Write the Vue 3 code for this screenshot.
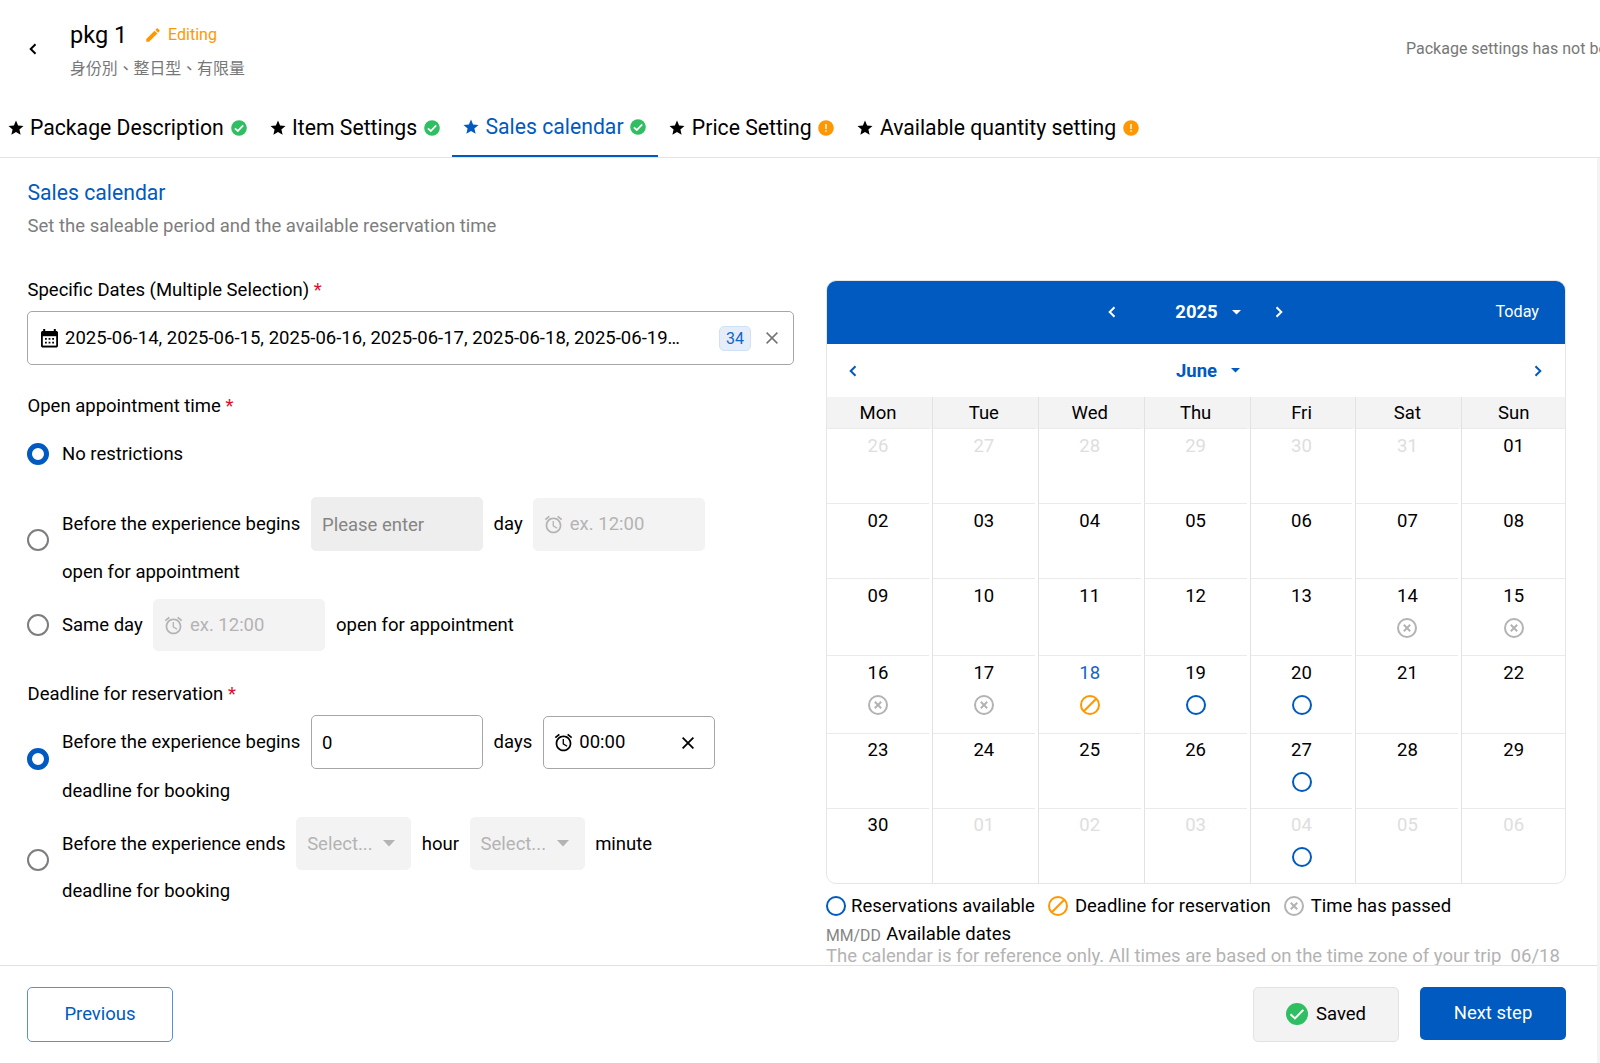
<template>
  <div class="page">
    <header class="page-header">
      <button class="back-btn" aria-label="Back">
        <svg width="8" height="12" viewBox="0 0 8 12" fill="none" stroke="currentColor" stroke-width="2">
          <polyline points="6.5 1.2 1.7 6 6.5 10.8" />
        </svg>
      </button>
      <div class="title-box">
        <div class="title-row">
          <h1 class="title">pkg 1</h1>
          <svg class="pencil" width="18" height="18" viewBox="0 0 24 24" fill="currentColor">
            <path d="M20.71 7.04c.39-.39.39-1.04 0-1.41l-2.34-2.34c-.37-.39-1.02-.39-1.41 0l-1.84 1.83 3.75 3.75M3 17.25V21h3.75L17.81 9.93l-3.75-3.75L3 17.25z" />
          </svg>
          <span class="status">Editing</span>
        </div>
        <p class="subtitle">身份別、整日型、有限量</p>
      </div>
      <div class="header-note">Package settings has not been</div>
    </header>

    <nav class="tabs">
      <div v-for="tab in tabs" :key="tab.id" class="tab" :class="{ active: tab.id === activeTab }" @click="activeTab = tab.id">
        <svg class="star" width="18" height="18" viewBox="0 0 24 24" fill="currentColor">
          <path d="M12 17.27L18.18 21l-1.64-7.03L22 9.24l-7.19-.61L12 2 9.19 8.63 2 9.24l5.46 4.73L5.82 21z" />
        </svg>
        <span>{{ tab.label }}</span>
        <svg class="badge" width="16" height="16" viewBox="0 0 16 16">
          <template v-if="tab.done">
            <circle cx="8" cy="8" r="7.8" fill="#2fbe61" />
            <polyline points="3.9 8.3 6.8 11 12.2 5.4" fill="none" stroke="#fff" stroke-width="1.8" />
          </template>
          <template v-else>
            <circle cx="8" cy="8" r="7.8" fill="#ff9800" />
            <path d="M7.3 4h1.4v5H7.3zM7.3 10.3h1.4v1.5H7.3z" fill="#fff" />
          </template>
        </svg>
      </div>
    </nav>

    <div class="body">
      <main class="content">
        <h2 class="section-title">Sales calendar</h2>
        <p class="section-desc">Set the saleable period and the available reservation time</p>

        <div class="columns">
          <section class="form">
            <div class="label">Specific Dates (Multiple Selection) <span class="required">*</span></div>
            <div class="field date-field">
              <svg width="17" height="19" viewBox="0 0 17 19">
                <path d="M2.2 0h2v2h8.6V0h2v2h.4c1 0 1.8.7 1.8 1.7v13.1c0 1-.8 1.8-1.8 1.8H1.8c-1 0-1.8-.8-1.8-1.8V3.7C0 2.7.8 2 1.8 2h.4z" fill="#000" />
                <path d="M1.8 7.2h13.4v9.4H1.8z" fill="#fff" />
                <path d="M4 9h1.8v1.8H4zM7.6 9h1.8v1.8H7.6zM11.2 9H13v1.8h-1.8zM4 12.8h1.8v1.8H4zM7.6 12.8h1.8v1.8H7.6zM11.2 12.8H13v1.8h-1.8z" fill="#000" />
              </svg>
              <span class="date-text">2025-06-14, 2025-06-15, 2025-06-16, 2025-06-17, 2025-06-18, 2025-06-19…</span>
              <span class="count">34</span>
              <svg class="clear grey" width="12" height="12" viewBox="0 0 12 12">
                <path d="M.6.6l10.8 10.8M11.4.6L.6 11.4" />
              </svg>
            </div>

            <div class="label open-label">Open appointment time <span class="required">*</span></div>

            <div class="option option-none">
              <span class="radio checked"></span>
              <span>No restrictions</span>
            </div>

            <div class="option option-before">
              <span class="radio"></span>
              <div class="option-body">
                <div class="line">
                  <span>Before the experience begins</span>
                  <div class="field disabled number">Please enter</div>
                  <span>day</span>
                  <div class="field disabled time">
                    <svg width="21" height="21" viewBox="0 0 24 24" fill="currentColor"><path :d="alarmPath" /></svg>
                    <span>ex. 12:00</span>
                  </div>
                </div>
                <div class="line-two">open for appointment</div>
              </div>
            </div>

            <div class="option option-same">
              <span class="radio"></span>
              <div class="line">
                <span>Same day</span>
                <div class="field disabled time">
                  <svg width="21" height="21" viewBox="0 0 24 24" fill="currentColor"><path :d="alarmPath" /></svg>
                  <span>ex. 12:00</span>
                </div>
                <span>open for appointment</span>
              </div>
            </div>

            <div class="label deadline-label">Deadline for reservation <span class="required">*</span></div>

            <div class="option option-begins">
              <span class="radio checked"></span>
              <div class="option-body">
                <div class="line">
                  <span>Before the experience begins</span>
                  <div class="field number">0</div>
                  <span>days</span>
                  <div class="field time">
                    <svg width="21" height="21" viewBox="0 0 24 24" fill="currentColor"><path :d="alarmPath" /></svg>
                    <span>00:00</span>
                    <svg class="clear" width="12" height="12" viewBox="0 0 12 12">
                      <path d="M.6.6l10.8 10.8M11.4.6L.6 11.4" />
                    </svg>
                  </div>
                </div>
                <div class="line-two">deadline for booking</div>
              </div>
            </div>

            <div class="option option-ends">
              <span class="radio"></span>
              <div class="option-body">
                <div class="line">
                  <span>Before the experience ends</span>
                  <div class="field disabled select">
                    <span>Select...</span>
                    <svg width="12" height="7" viewBox="0 0 12 7" fill="currentColor"><path d="M0 0h12L6 6.5z" /></svg>
                  </div>
                  <span>hour</span>
                  <div class="field disabled select">
                    <span>Select...</span>
                    <svg width="12" height="7" viewBox="0 0 12 7" fill="currentColor"><path d="M0 0h12L6 6.5z" /></svg>
                  </div>
                  <span>minute</span>
                </div>
                <div class="line-two">deadline for booking</div>
              </div>
            </div>
          </section>

          <section class="calendar-side">
            <div class="calendar">
              <div class="year-bar">
                <svg class="chevron" width="8" height="12" viewBox="0 0 8 12"><polyline points="6.5 1.2 1.7 6 6.5 10.8" /></svg>
                <div class="year">
                  2025
                  <svg width="9" height="5" viewBox="0 0 9 5" fill="currentColor"><path d="M0 0h9L4.5 4.5z" /></svg>
                </div>
                <svg class="chevron" width="8" height="12" viewBox="0 0 8 12"><polyline points="1.5 1.2 6.3 6 1.5 10.8" /></svg>
                <span class="today">Today</span>
              </div>
              <div class="month-bar">
                <svg class="chevron" width="8" height="12" viewBox="0 0 8 12"><polyline points="6.5 1.2 1.7 6 6.5 10.8" /></svg>
                <div class="month">
                  June
                  <svg width="9" height="5" viewBox="0 0 9 5" fill="currentColor"><path d="M0 0h9L4.5 4.5z" /></svg>
                </div>
                <svg class="chevron" width="8" height="12" viewBox="0 0 8 12"><polyline points="1.5 1.2 6.3 6 1.5 10.8" /></svg>
              </div>
              <div class="grid">
                <div v-for="day in weekdays" :key="day" class="cell weekday">
                  <div class="cell-inner">{{ day }}</div>
                </div>
                <div v-for="(cell, i) in cells" :key="i" class="cell">
                  <div class="cell-inner" :class="{ muted: cell.muted, current: cell.mark === 'deadline' }">
                    <span>{{ cell.date }}</span>
                    <svg v-if="cell.mark" class="mark" width="20" height="20" viewBox="0 0 20 20" fill="none" :stroke="marks[cell.mark].color">
                      <circle cx="10" cy="10" r="9" stroke-width="2" />
                      <path :d="marks[cell.mark].path" stroke-width="2" />
                    </svg>
                  </div>
                </div>
              </div>
            </div>

            <div class="legend">
              <div v-for="item in legend" :key="item.mark" class="legend-item" :class="item.mark">
                <svg width="20" height="20" viewBox="0 0 20 20" fill="none" :stroke="marks[item.mark].color">
                  <circle cx="10" cy="10" r="9" stroke-width="2" />
                  <path :d="marks[item.mark].path" stroke-width="2" />
                </svg>
                <span>{{ item.label }}</span>
              </div>
            </div>
            <div class="dates-legend">
              <span class="mmdd">MM/DD</span>
              <span>Available dates</span>
            </div>
            <p class="hint">The calendar is for reference only. All times are based on the time zone of your trip&nbsp; 06/18</p>
          </section>
        </div>
      </main>

      <footer class="footer">
        <button class="btn btn-previous">Previous</button>
        <button class="btn btn-saved">
          <svg width="22" height="22" viewBox="0 0 16 16">
            <circle cx="8" cy="8" r="8" fill="#2fbe61" />
            <polyline points="3.3 8.2 6.5 11.2 12.6 5" fill="none" stroke="#fff" stroke-width="1.5" />
          </svg>
          Saved
        </button>
        <button class="btn btn-next">Next step</button>
      </footer>
    </div>
  </div>
</template>

<script setup>
import { ref } from 'vue';

const activeTab = ref('calendar');

const tabs = [
  { id: 'description', label: 'Package Description', done: true },
  { id: 'items', label: 'Item Settings', done: true },
  { id: 'calendar', label: 'Sales calendar', done: true },
  { id: 'price', label: 'Price Setting', done: false },
  { id: 'quantity', label: 'Available quantity setting', done: false }
];

const weekdays = ['Mon', 'Tue', 'Wed', 'Thu', 'Fri', 'Sat', 'Sun'];

const alarmPath = 'M22 5.72l-4.6-3.86-1.29 1.53 4.6 3.86L22 5.72zM7.88 3.39L6.6 1.86 2 5.71l1.29 1.53 4.59-3.85zM12.5 8H11v6l4.75 2.85.75-1.23-4-2.37V8zM12 4c-4.97 0-9 4.03-9 9s4.02 9 9 9c4.97 0 9-4.03 9-9s-4.03-9-9-9zm0 16c-3.87 0-7-3.13-7-7s3.13-7 7-7 7 3.13 7 7-3.13 7-7 7z';

const marks = {
  available: { color: '#005abf', path: '' },
  deadline: { color: '#ff9800', path: 'M3.8 16.2L16.2 3.8' },
  passed: { color: '#b3b3b3', path: 'M6.8 6.8l6.4 6.4M13.2 6.8l-6.4 6.4' }
};

const legend = [
  { mark: 'available', label: 'Reservations available' },
  { mark: 'deadline', label: 'Deadline for reservation' },
  { mark: 'passed', label: 'Time has passed' }
];

// June 2025, padded with the days around it; keys are positions in the 6x7 grid
const markByIndex = {
  19: 'passed',
  20: 'passed',
  21: 'passed',
  22: 'passed',
  23: 'deadline',
  24: 'available',
  25: 'available',
  32: 'available',
  39: 'available'
};

const cells = Array.from({ length: 42 }, (_, i) => {
  const date = new Date(2025, 4, 26 + i);
  return {
    date: String(date.getDate()).padStart(2, '0'),
    muted: date.getMonth() !== 5,
    mark: markByIndex[i]
  };
});
</script>

<style>
body {
  margin: 0;
  background: #fff;
}
</style>

<style scoped>
.page {
  width: 1600px;
  height: 1063px;
  overflow: hidden;
  display: flex;
  flex-direction: column;
  background: #fff;
  color: #000;
  font-family: Roboto, "Noto Sans CJK TC", sans-serif;
  font-size: 18.5px;
  line-height: 24px;
  box-sizing: border-box;
}

.page *,
.page *::before {
  box-sizing: border-box;
}

svg {
  display: block;
  flex-shrink: 0;
}

h1,
h2,
p {
  margin: 0;
  font-weight: 400;
}

button {
  font: inherit;
  letter-spacing: inherit;
  padding: 0;
  cursor: pointer;
}

/* Header */
.page-header {
  height: 105px;
  flex-shrink: 0;
  display: flex;
  align-items: flex-start;
  white-space: nowrap;
}

.back-btn {
  margin: 43px 0 0 28.5px;
  border: none;
  background: none;
  color: #000;
}

.title-box {
  margin: 19px 0 0 33.5px;
}

.title-row {
  display: flex;
  align-items: center;
  height: 31px;
}

.title {
  font-size: 23.5px;
}

.pencil {
  color: #ff9800;
  margin-left: 17px;
}

.status {
  color: #ff9800;
  font-size: 16px;
  margin-left: 6px;
}

.subtitle {
  font-size: 15.9px;
  line-height: 24px;
  color: #777;
  margin-top: 7px;
}

.header-note {
  width: 194px;
  margin: 37px 0 0 auto;
  overflow: hidden;
  font-size: 16px;
  color: #777;
}

/* Tabs */
.tabs {
  height: 53px;
  flex-shrink: 0;
  display: flex;
  border-bottom: 1px solid #e4e4e4;
  margin-left: -3.5px;
}

.tab {
  height: 52px;
  display: flex;
  align-items: center;
  padding: 0 12px 6px 10px;
  font-size: 21.2px;
  cursor: pointer;
  white-space: nowrap;
}

.star {
  margin-right: 5.5px;
}

.badge {
  margin-left: 6.8px;
}

.tab.active {
  color: #005abf;
  border-bottom: 2px solid #005abf;
}

/* Body */
.body {
  flex: 1;
  min-height: 0;
  display: flex;
  flex-direction: column;
  border-right: 3px solid #f3f3f3;
}

.content {
  height: 807px;
  overflow: hidden;
  padding: 21px 31px 0 27px;
}

.section-title {
  font-size: 21.2px;
  line-height: 28px;
  padding-left: 0.5px;
  color: #005abf;
}

.section-desc {
  margin-top: 7px;
  padding-left: 0.5px;
  letter-spacing: 0.015px;
  color: #7d7d7d;
}

.columns {
  display: flex;
  justify-content: space-between;
  margin-top: 40px;
}

.form {
  width: 767px;
}

.label {
  padding-left: 0.5px;
}

.required {
  color: #d9112f;
}

.field {
  display: flex;
  align-items: center;
  height: 54px;
  border: 1px solid #a6a6a6;
  border-radius: 5px;
  padding-left: 10px;
  white-space: nowrap;
}

.field.disabled {
  background: #f3f3f3;
  border-color: #f3f3f3;
  color: #b3b3b3;
}

.date-field {
  margin-top: 9px;
  padding: 0 15px 0 13px;
}

.date-text {
  margin-left: 7px;
  flex: 1;
  letter-spacing: 0.015px;
}

.count {
  width: 32px;
  height: 25px;
  border: 1px solid #cfe2f5;
  border-radius: 5px;
  background: #e5eef8;
  color: #1464c8;
  font-size: 16px;
  line-height: 23px;
  text-align: center;
}

.clear {
  fill: none;
  stroke: #000;
  stroke-width: 1.8;
}

.clear.grey {
  stroke: #777;
  stroke-width: 1.6;
  margin-left: 15px;
}

.open-label {
  margin-top: 29px;
}

.deadline-label {
  margin-top: 31px;
}

.option {
  display: flex;
  align-items: center;
  white-space: nowrap;
}

.radio {
  width: 22px;
  height: 22px;
  margin: 0 13px 1px 0;
  flex-shrink: 0;
  border: 2px solid #7d7d7d;
  border-radius: 50%;
}

.radio.checked {
  border: 5.5px solid #005abf;
}

.line {
  display: flex;
  align-items: center;
  gap: 10.6px;
}

.option-none {
  margin-top: 24px;
}

.option-before {
  margin-top: 31px;
}

.option-same {
  margin-top: 15px;
}

.option-begins {
  margin-top: 9px;
}

.option-ends {
  margin-top: 14px;
}

.line-two {
  margin-top: 9px;
}

.option-begins .line-two {
  margin-top: 10px;
}

.number {
  width: 172px;
  padding-top: 1px;
}

.number.disabled {
  background: #eee;
  border-color: #eee;
  color: #858585;
}

.time {
  width: 172px;
  height: 53px;
  padding: 0 20px 0 9px;
}

.option-same .time {
  height: 52px;
}

.time span {
  margin-left: 5.5px;
}

.time .clear {
  margin: 2px 0 0 auto;
}

.select {
  width: 115px;
  height: 53px;
  justify-content: space-between;
  padding: 0 15px 0 10px;
}

/* Calendar */
.calendar-side {
  width: 740px;
  margin-top: 2px;
}

.calendar {
  height: 604px;
  border: 1px solid #e6e6e6;
  border-radius: 10px;
  overflow: hidden;
}

.year-bar {
  height: 64px;
  margin: -1px -1px 0;
  display: grid;
  grid-template-columns: 282px 8px 1fr 8px 283px;
  align-items: center;
  background: #005abf;
  color: #fff;
}

.year-bar .chevron:first-child {
  grid-column: 2;
}

.chevron {
  fill: none;
  stroke: currentColor;
  stroke-width: 2;
}

.year,
.month {
  display: flex;
  align-items: center;
  justify-content: center;
  gap: 14px;
  font-weight: 700;
}

.year {
  margin-left: 25px;
}

.month {
  margin-left: 25px;
}

.today {
  font-size: 16.2px;
  text-align: right;
  padding-right: 27px;
}

.month-bar {
  height: 53px;
  display: flex;
  align-items: center;
  justify-content: space-between;
  padding: 0 23px 0 22px;
  color: #005abf;
}

.grid {
  display: grid;
  grid-template-columns: repeat(6, 105.9px) 1fr;
  grid-template-rows: 32px 75px 75px 77px 78px 75px 75px;
}

.cell {
  border-right: 1px solid #e2e2e2;
  padding-right: 3px;
}

.cell:nth-child(7n) {
  border-right: none;
  padding-right: 0;
}

.cell-inner {
  height: 100%;
  padding-top: 5px;
  display: flex;
  flex-direction: column;
  align-items: center;
  border-bottom: 1px solid #eaeaea;
}

.weekday {
  background: #f3f3f3;
}

.weekday .cell-inner {
  padding-top: 4px;
}

/* the last two weeks sit a touch higher in their rows */
.cell:nth-child(n + 36) .cell-inner {
  padding-top: 4px;
}

.cell-inner.muted span {
  color: #dedede;
}

.cell-inner.current span {
  color: #1464c8;
}

.mark {
  margin-top: 10px;
}

/* Legend */
.legend {
  display: flex;
  align-items: center;
  height: 24px;
  margin-top: 10px;
  white-space: nowrap;
}

.legend-item {
  display: flex;
  align-items: center;
  gap: 7px;
  margin-right: 13px;
}

.legend-item.available {
  gap: 5px;
}

.dates-legend {
  display: flex;
  gap: 5.5px;
  margin-top: 4px;
  line-height: 24px;
}

.mmdd {
  font-size: 15.8px;
  line-height: 27px;
  color: #858585;
}

.hint {
  color: #b3b3b3;
  line-height: 24px;
  margin-top: -5px;
  letter-spacing: 0.01px;
  white-space: nowrap;
}

/* Footer */
.footer {
  flex: 1;
  display: flex;
  align-items: flex-start;
  border-top: 1px solid #e0e0e0;
  padding: 21px 31px 0 27px;
  background: #fff;
}

.btn {
  width: 146px;
  height: 55px;
  border-radius: 5px;
  padding-bottom: 2px;
}

.btn-previous {
  border: 1px solid #5a90d4;
  background: #fff;
  color: #005abf;
}

.btn-saved {
  margin-left: auto;
  display: flex;
  align-items: center;
  justify-content: center;
  gap: 8px;
  border: 1px solid #e2e2e2;
  background: #f3f3f3;
  color: #000;
}

.btn-saved svg {
  margin-top: 1px;
}

.btn-next {
  height: 53px;
  margin-left: 21px;
  border: none;
  background: #005abf;
  color: #fff;
}
</style>
